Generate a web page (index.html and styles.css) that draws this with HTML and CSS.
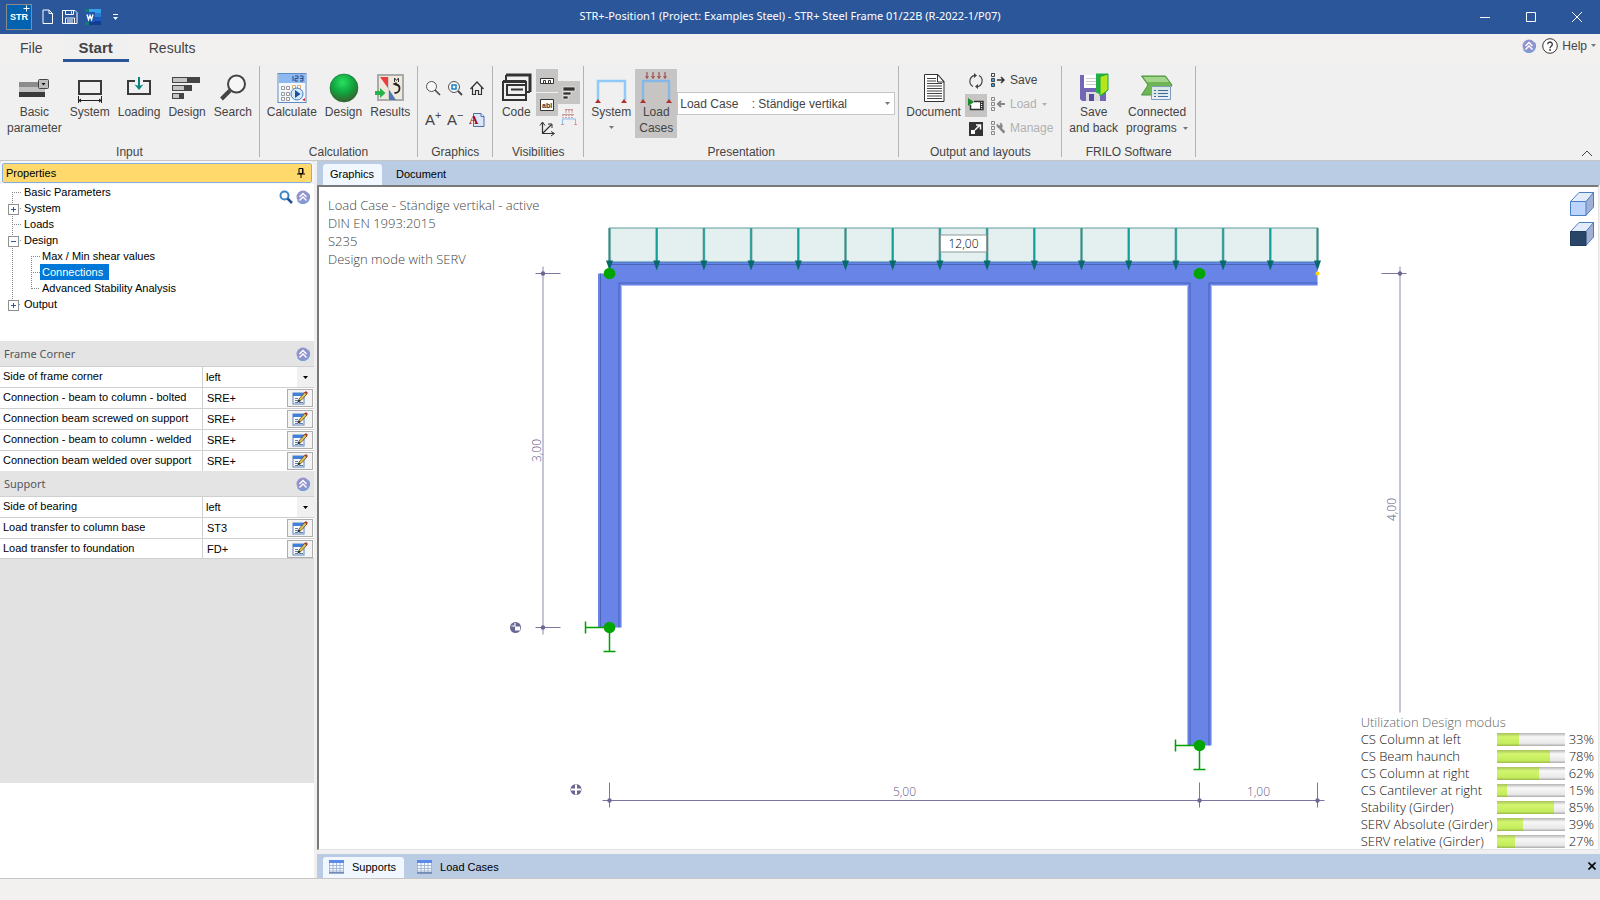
FILE: index.html
```html
<!DOCTYPE html>
<html lang="en">
<head>
  <meta charset="UTF-8" />
  <meta name="viewport" content="width=device-width, initial-scale=1.0"/>
  <title>STR+-Position1 (Project: Examples Steel)</title>
  <link rel="stylesheet" href="styles.css">
</head>
<body>
  <!-- shared icons -->
  <svg class="defs" aria-hidden="true">
    <symbol id="i-collapse" viewBox="0 0 14 14">
      <circle cx="7" cy="7" r="6.5" fill="#9292cf"/>
      <path d="M1.5 10.5a6.500 6.500 0 0 0 11-7" fill="none" stroke="#6fa0d8" stroke-width="1.200"/>
      <path d="M3.500 7 7 3.500 10.500 7M3.500 10.500 7 7l3.500 3.500" fill="none" stroke="#fff" stroke-width="1.400"/>
    </symbol>
    <symbol id="i-edit" viewBox="0 0 16 14">
      <rect x="1" y="2" width="11" height="11" fill="#fff" stroke="#5a82b8"/>
      <path d="M1 2h11v3H1z" fill="#3f7fe0"/>
      <path d="M3 7.500h3M3 9.500h3M3 11.500h3M7 11.500h4" stroke="#5b7fae"/>
      <path d="M6 11 7 8l6-7 2 2-6 6.500z" fill="#e6c04c" stroke="#4a4a40" stroke-width=".8"/>
      <path d="m12.500 1.500 1.500-1.500 2 2-1.500 1.500z" fill="#b8322c"/>
      <path d="M5.500 11.500 7 8.500l1.500 1.500z" fill="#222"/>
    </symbol>
    <symbol id="i-down" viewBox="0 0 5 3">
      <path d="M0 0h5L2.500 3z" fill="currentColor"/>
    </symbol>
    <symbol id="i-grid" viewBox="0 0 15 14">
      <rect x=".5" y=".5" width="14" height="12" fill="#f4f8ff" stroke="#a8b8d8"/>
      <path d="M0 0h15v3H0z" fill="#5b8bea"/>
      <path d="M0 5.500h15M0 8.500h15M0 11h15M4 3v10M7.500 3v10M11 3v10" stroke="#9fb2d2" stroke-width=".9"/>
      <path d="M0 13h15" stroke="#3f5f92"/>
    </symbol>
    <symbol id="i-squares" viewBox="0 0 4 14">
      <path d="M.5.5h3v3h-3zM.5 10.500h3v3h-3zM.5 5.500h3v3h-3z" fill="none" stroke="currentColor"/>
    </symbol>
  </svg>

  <header class="titlebar">
    <div class="quick">
      <svg class="logo" viewBox="0 0 26 26">
        <rect x=".5" y=".5" width="25" height="25" fill="#0463b0" stroke="#8a8a8a"/>
        <text x="4" y="16">STR</text>
        <path d="M20.500 1.500v6M17.500 4.500h6" stroke="#fff"/>
      </svg>
      <button aria-label="New"><svg width="12" height="16" viewBox="0 0 12 16"><path d="M1 1h6l3.500 3.500v10H1zM7 1v3.500h3.500" fill="none" stroke="#fff"/></svg></button>
      <button aria-label="Save"><svg width="16" height="16" viewBox="0 0 16 16"><path d="M.5 1.500h12.500l2 2v11H.5zM3.500 1.500v4h8v-4M9.500 2.500v2M3.500 14.500V9h9v5.500M5 11h6M5 13h6" fill="none" stroke="#fff"/></svg></button>
      <button aria-label="Word">
        <svg width="16" height="16" viewBox="0 0 16 16">
          <path d="M4 0h12v5H4z" fill="#35a0ea"/><path d="M4 4h12v4H4z" fill="#2b7cd3"/><path d="M4 8h12v4H4z" fill="#185abd"/><path d="M4 12h12v4H4z" fill="#103f91"/>
          <path d="M0 0h4v3H0zM0 13h4v3H0z" fill="#107c6c"/>
          <rect y="3" width="10" height="10" fill="#2056ad"/>
          <path d="m2 5.500 1.500 5L5 6.500l1.500 4 1.500-5" fill="none" stroke="#fff" stroke-width="1.400"/>
        </svg>
      </button>
      <button aria-label="Customize"><svg width="7" height="8" viewBox="0 0 7 8"><path d="M1 1.500h5" stroke="#fff"/><path d="M1 4h5L3.500 7z" fill="#fff"/></svg></button>
    </div>
    <h1>STR+-Position1 (Project: Examples Steel) - STR+ Steel Frame 01/22B (R-2022-1/P07)</h1>
    <div class="window-buttons">
      <button aria-label="Minimize"><svg viewBox="0 0 10 10"><path d="M0 5.500h10"/></svg></button>
      <button aria-label="Maximize"><svg viewBox="0 0 10 10"><path d="M.5.5h9v9h-9z"/></svg></button>
      <button aria-label="Close"><svg viewBox="0 0 10 10"><path d="m0 0 10 10M10 0 0 10"/></svg></button>
    </div>
  </header>

  <nav class="menu">
    <a href="#file">File</a>
    <a href="#start" class="active">Start</a>
    <a href="#results">Results</a>
    <div class="help">
      <button aria-label="Collapse ribbon"><svg width="14" height="14"><use href="#i-collapse"/></svg></button>
      <button>
        <svg width="16" height="16" viewBox="0 0 16 16"><circle cx="8" cy="8" r="7.300" fill="#fff" stroke="#333"/><path d="M5.700 6.300a2.300 2.300 0 1 1 3.500 2C8.300 8.900 8 9.200 8 10.300" fill="none" stroke="#333" stroke-width="1.300"/><circle cx="8" cy="12" r=".9" fill="#333"/></svg>
        Help
        <svg class="caret" width="5" height="3"><use href="#i-down"/></svg>
      </button>
    </div>
  </nav>

  <div class="ribbon">
    <section class="group">
      <div class="tools">
        <button class="tool">
          <svg width="32" height="32" viewBox="0 0 32 32"><path d="M1 10h26v5H1z" fill="#8c8c8c"/><path d="M1 15h26v5H1z" fill="#c2c2c2"/><path d="M1 20h26v5H1z" fill="#3b3b3b"/><rect x="20.500" y="7.500" width="10" height="9" rx="1" fill="#bdbdbd" stroke="#444"/><path d="M23.500 11h4l-2 2.500z" fill="#111"/></svg>
          <span>Basic<br>parameter</span>
        </button>
        <button class="tool">
          <svg width="32" height="32" viewBox="0 0 32 32"><path d="M5 9h22v13H5z" fill="none" stroke="#3b3b3b" stroke-width="2"/><path d="M4 28.500h24M4.500 24v7M27.500 24v7" stroke="#222"/><path d="m4 28.500 3-2v4zM28 28.500l-3-2v4z" fill="#222"/></svg>
          <span>System</span>
        </button>
        <button class="tool">
          <svg width="32" height="32" viewBox="0 0 32 32"><path d="M12 9H5v13h22V9h-7" fill="none" stroke="#3b3b3b" stroke-width="2"/><path d="M16 5v9" stroke="#0a8583" stroke-width="2"/><path d="M11.500 12.500 16 18l4.500-5.500L16 14z" fill="#0a8583"/></svg>
          <span>Loading</span>
        </button>
        <button class="tool">
          <svg width="32" height="32" viewBox="0 0 32 32"><path d="M1 5h28v6H1zM1 13h20v6H1zM1 21h12v6H1z" fill="#444"/><path d="M2 6h14v4H2zM2 14h11v4H2zM2 22h6v4H2z" fill="#c4c4c4"/></svg>
          <span>Design</span>
        </button>
        <button class="tool">
          <svg width="32" height="32" viewBox="0 0 32 32"><circle cx="19.500" cy="12" r="8.500" fill="#f6f6f6" stroke="#444" stroke-width="2"/><path d="m13 18.500-8.500 8.500" stroke="#444" stroke-width="4"/></svg>
          <span>Search</span>
        </button>
      </div>
      <h2>Input</h2>
    </section>

    <section class="group">
      <div class="tools">
        <button class="tool">
          <svg width="32" height="32" viewBox="0 0 32 32"><rect x="2" y="1.500" width="28" height="29" fill="#f4f8fd" stroke="#5c8cc8"/><path d="M3 2h26v9H3z" fill="#8db8f0"/><path d="M17 4v5M19 4h3v2.500h-3V9h3M24 4h3v5h-3M24 6.500h3" fill="none" stroke="#2a4a80"/><path d="M5.500 14.500h3v3h-3zM10.500 14.500h3v3h-3zM5.500 20.500h3v3h-3zM10.500 20.500h3v3h-3zM5.500 25.500h3v3h-3zM10.500 25.500h3v3h-3z" fill="#fff" stroke="#999"/><path d="M16.500 13.500h3v3h-3zM21.500 13.500h3v3h-3z" fill="#fff" stroke="#e0a870"/><circle cx="21" cy="22" r="6" fill="#d5ebf9" stroke="#447fbd"/><path d="M19 18v8l5.500-4z" fill="#1d4f9c"/><path d="m26 28 3-2v3z" fill="#c33"/></svg>
          <span>Calculate</span>
        </button>
        <button class="tool">
          <svg width="32" height="32" viewBox="0 0 32 32">
            <defs><radialGradient id="ball" cx=".45" cy=".3" r=".75"><stop offset="0" stop-color="#2ae060"/><stop offset=".5" stop-color="#0fa63f"/><stop offset="1" stop-color="#40552c"/></radialGradient></defs>
            <circle cx="16" cy="16" r="14" fill="url(#ball)" stroke="#1a6b33" stroke-width=".6"/>
          </svg>
          <span>Design</span>
        </button>
        <button class="tool">
          <svg width="32" height="32" viewBox="0 0 32 32"><rect x="4" y="3" width="25" height="25" fill="#efe9dc" stroke="#aaa" stroke-width="2"/><path d="M6 5h8v11z" fill="#ee3b3b"/><path d="M14 16v12h8z" fill="#4f78b5"/><path d="M14.500 5v23" stroke="#ccc"/><path d="M20.500 10V6l2 2.500 2-2.500v4" fill="none" stroke="#333"/><path d="M21 12q5 1 4.500 5-.5 4-5 4" fill="none" stroke="#222" stroke-width="1.800"/><path d="m18.500 12 4-2v4z" fill="#222"/><path d="M1 19h5v-3l5.500 5L6 26v-3H1z" fill="#27b34b"/></svg>
          <span>Results</span>
        </button>
      </div>
      <h2>Calculation</h2>
    </section>

    <section class="group">
      <div class="small-grid">
        <button aria-label="Zoom"><svg viewBox="0 0 16 16"><circle cx="6.500" cy="6.500" r="5" fill="#f8f8f8" stroke="#555"/><path d="m10 10 5 5" stroke="#444" stroke-width="1.600"/></svg></button>
        <button aria-label="Zoom all"><svg viewBox="0 0 16 16"><circle cx="7" cy="7" r="5.500" fill="#f8f8f8" stroke="#555"/><path d="M5 5h4v4H5z" fill="#fff" stroke="#1583c8" stroke-width="1.500"/><path d="m11 11 4 4" stroke="#444" stroke-width="1.800"/></svg></button>
        <button aria-label="Home"><svg viewBox="0 0 16 16"><path d="M1.500 9 8 2l6.500 7M3.500 7.500v7h3v-4h3v4h3v-7" fill="none" stroke="#333" stroke-width="1.200"/></svg></button>
        <button class="font-size"><span>A<sup>+</sup></span></button>
        <button class="font-size"><span>A<sup>−</sup></span></button>
        <button aria-label="Font"><svg viewBox="0 0 16 16"><path d="M4.500 1.500H12l3 3v10H4.500z" fill="#dce6f6" stroke="#4a6fae"/><path d="M12 1.500v3h3" fill="#fff" stroke="#4a6fae"/><text class="font-a" x="0" y="12">A</text></svg></button>
      </div>
      <h2>Graphics</h2>
    </section>

    <section class="group">
      <div class="tools">
        <button class="tool code">
          <svg width="32" height="32" viewBox="0 0 32 32"><path d="M6 3h24v17" fill="none" stroke="#333" stroke-width="3"/><path d="M6 3v5M3 10h23v18H3z" fill="none" stroke="#333" stroke-width="2"/><path d="M3 9.500h23" stroke="#333" stroke-width="3"/><rect x="7" y="13" width="19" height="10" fill="#f0f0f0" stroke="#333" stroke-width="2"/><path d="M26 20h4M11 17.500h12" stroke="#333" stroke-width="2"/></svg>
          <span>Code</span>
        </button>
        <div class="small-col">
          <button class="on" aria-label="Dimensions"><svg viewBox="0 0 16 16"><path d="M1.500 5.500h13v5h-13z" fill="#fff" stroke="#333"/><path d="M4.500 10V7.500h2V10M9.500 10V7.500h2V10" fill="none" stroke="#333"/></svg></button>
          <button class="on" aria-label="Labels"><svg viewBox="0 0 16 16"><path d="M1.500 2.500h13v11h-13z" fill="#fff" stroke="#333"/><text class="abl" x="3" y="11">abl</text></svg></button>
          <button aria-label="Axes"><svg viewBox="0 0 16 16"><path d="M3.500 2v10.500H15M3.500 12.500l9-9" fill="none" stroke="#333" stroke-width="1.200"/><path d="M1 4.500 3.500 1 6 4.500M12 10.500l3.500 2-3.500 2.500M9 3h4v4" fill="none" stroke="#333"/></svg></button>
        </div>
        <div class="small-col">
          <button class="on" aria-label="Utilization"><svg viewBox="0 0 16 16"><path d="M2 2h12v4H2zM2 7h8v3H2zM2 11h5v3H2z" fill="#333" stroke="#fff" stroke-width=".6"/></svg></button>
          <button aria-label="Loads"><svg viewBox="0 0 16 16"><path d="M1.500 15v-5h13v5" fill="none" stroke="#8bbdea"/><path d="M5 .5V4M8 .5V4M11 .5V4M2 5v4M5 5v4M8 5v4M11 5v4" stroke="#b06060" stroke-dasharray="2 1"/><path d="M4 .5h8M3 5.500h10" stroke="#c99"/><path d="M0 16h3M13 16h3" stroke="#c33"/></svg></button>
        </div>
      </div>
      <h2>Visibilities</h2>
    </section>

    <section class="group">
      <div class="tools">
        <button class="tool">
          <svg width="32" height="32" viewBox="0 0 32 32"><path d="M3 28V9h27v19" fill="none" stroke="#90c8f8" stroke-width="2.500"/><path d="m3 27 3 4H0zM29 27l3 4h-6z" fill="#b03030"/></svg>
          <span>System</span>
          <svg class="caret" width="5" height="3"><use href="#i-down"/></svg>
        </button>
        <button class="tool on">
          <svg width="32" height="32" viewBox="0 0 32 32"><path d="M3 28V9h26v19" fill="none" stroke="#85b8e6" stroke-width="2.500"/><path d="m3 27 3 4H0zM29 27l3 4h-6z" fill="#b03030"/><path d="M7 0v6M13 0v6M19 0v6M25 0v6" stroke="#a05050" stroke-width="1.200"/><path d="M5.500 4 7 6.500 8.500 4M11.500 4 13 6.500 14.500 4M17.500 4 19 6.500 20.500 4M23.500 4 25 6.500 26.500 4" fill="none" stroke="#a04848"/></svg>
          <span>Load<br>Cases</span>
        </button>
        <div class="combo">
          <select aria-label="Load case">
            <option>Load Case&nbsp;&nbsp;&nbsp;&nbsp;: Ständige vertikal</option>
          </select>
          <svg class="caret" width="5" height="3"><use href="#i-down"/></svg>
        </div>
      </div>
      <h2>Presentation</h2>
    </section>

    <section class="group">
      <div class="tools">
        <button class="tool">
          <svg width="32" height="32" viewBox="0 0 32 32"><path d="M6.500 2.500H20l6 7v20H6.500z" fill="#fff" stroke="#333"/><path d="M19.500 2.500v7.500H26z" fill="#fff" stroke="#333"/><path d="M9 6.500h9M9 9h9M9 11.500h15M9 14h15M9 16.500h15M9 19h15M9 21.500h15M9 24h15M9 26.500h15" stroke="#444"/></svg>
          <span>Document</span>
        </button>
        <div class="small-col">
          <button aria-label="Refresh"><svg viewBox="0 0 16 16"><path d="M5 13.500A6 6 0 0 1 7 2.300M11 2.500a6 6 0 0 1-2 11.200" fill="none" stroke="#444" stroke-width="1.200"/><path d="m6 0 3 2.500L6 5zM10 11l-3 2.500L10 16z" fill="#444"/></svg></button>
          <button class="on" aria-label="Preview"><svg viewBox="0 0 16 16"><path d="M6 4.500h9v8H2.500V8" fill="#fff" stroke="#333" stroke-width="1.500"/><path d="M12.500 4v9M13 6.500h2M13 8.500h2M13 10.500h2" stroke="#333"/><path d="M0 1v8l6-4z" fill="#1c8a2c"/></svg></button>
          <button aria-label="Full size"><svg viewBox="0 0 16 16"><path d="M1 1h14v14H1z" fill="#333"/><path d="M3 9h4v4H3z" fill="#fff"/><path d="m7 9 5-5M8 4h4.500v4.500" fill="none" stroke="#fff" stroke-width="1.500"/></svg></button>
        </div>
        <div class="layout-col">
          <button><svg width="14" height="14"><use href="#i-squares" width="4"/><path d="M1 6h2v2H1zM1 11h2v2H1z" fill="#39a9e8"/><path d="M6 7h7M10 4l3 3-3 3" fill="none" stroke="#333" stroke-width="1.500"/></svg> Save</button>
          <button disabled><svg width="14" height="14"><use href="#i-squares" width="4"/><path d="M7 7h7M10 4 7 7l3 3" fill="none" stroke="#888" stroke-width="2"/></svg> Load <svg class="caret" width="5" height="3"><use href="#i-down"/></svg></button>
          <button disabled><svg width="14" height="14"><use href="#i-squares" width="4"/><path d="m9 7 4.500 4.500" stroke="#888" stroke-width="2.500"/><path d="M6 2.500 8 4.500l1.500-1L8.500 1.500A3.500 3.500 0 0 1 11 7 3.500 3.500 0 0 1 6 2.500z" fill="#888"/></svg> Manage</button>
        </div>
      </div>
      <h2>Output and layouts</h2>
    </section>

    <section class="group">
      <div class="tools">
        <button class="tool">
          <svg width="32" height="32" viewBox="0 0 32 32"><path d="M2 3h26v26H4l-2-2z" fill="#7566b5"/><path d="M6 3h16v13H6z" fill="#fff"/><path d="M8 6.500h12M8 9.500h12M8 12.500h12" stroke="#ccc"/><path d="M8 20h14v9H8z" fill="#ddd"/><path d="M11 22h5v7h-5z" fill="#5a4b9c"/><path d="M18 1.500h12v16l-5 6-7-3z" fill="#22b04a"/><path d="M22 4.500 30 2v16l-8 6z" fill="#b5e61d" stroke="#1aa53c"/></svg>
          <span>Save<br>and back</span>
        </button>
        <button class="tool">
          <svg width="32" height="32" viewBox="0 0 32 32"><path d="M.5 4h24l6.500 9-6 10H.5l6.500-10z" fill="#6fb552" stroke="#4b9440"/><path d="M2.500 5H24l4 5H6z" fill="#a3d68a"/><path d="M10.500 14.500h19v13h-19z" fill="#e6eef6" fill-opacity=".9" stroke="#7d9cc0"/><path d="M13 18.500h2M13 21.500h2M13 24.500h2M17 18.500h10M17 21.500h10M17 24.500h10" stroke="#456a9c"/></svg>
          <span>Connected<br>programs <svg class="caret" width="5" height="3"><use href="#i-down"/></svg></span>
        </button>
      </div>
      <h2>FRILO Software</h2>
    </section>

    <button class="ribbon-toggle" aria-label="Hide ribbon"><svg width="12" height="7" viewBox="0 0 12 7"><path d="m1 6 5-5 5 5" fill="none" stroke="#444"/></svg></button>
  </div>

  <main>
    <aside>
      <div class="panel-title">
        <h2>Properties</h2>
        <button aria-label="Pin"><svg width="8" height="10" viewBox="0 0 8 10"><path d="M2 .5h4v5H2zM5.500.5v5M0 6h8M4 6v4" fill="none" stroke="#000"/></svg></button>
      </div>

      <div class="tree-panel">
        <ul class="tree">
          <li><a href="#basic">Basic Parameters</a></li>
          <li class="node"><a href="#system">System</a></li>
          <li><a href="#loads">Loads</a></li>
          <li class="node open"><a href="#design">Design</a>
            <ul>
              <li><a href="#shear">Max / Min shear values</a></li>
              <li><a href="#connections" class="selected">Connections</a></li>
              <li><a href="#stability">Advanced Stability Analysis</a></li>
            </ul>
          </li>
          <li class="node"><a href="#output">Output</a></li>
        </ul>
        <div class="tree-tools">
          <button aria-label="Find"><svg width="14" height="14" viewBox="0 0 14 14"><circle cx="5.500" cy="5.500" r="4" fill="#fff" stroke="#3c86c8" stroke-width="2"/><path d="m8.500 8.500 4.500 4.500" stroke="#24509c" stroke-width="2.500"/></svg></button>
          <button aria-label="Collapse"><svg width="14" height="14"><use href="#i-collapse"/></svg></button>
        </div>
      </div>

      <div class="properties">
        <div class="prop-head"><h3>Frame Corner</h3><button aria-label="Collapse Frame Corner"><svg width="14" height="14"><use href="#i-collapse"/></svg></button></div>
        <div class="prop choice"><label for="corner">Side of frame corner</label><div class="combo"><select id="corner"><option>left</option><option>right</option></select><svg class="caret" width="5" height="3"><use href="#i-down"/></svg></div></div>
        <div class="prop"><label for="bolted">Connection - beam to column - bolted</label><input id="bolted" value="SRE+"><button aria-label="Edit"><svg width="16" height="14"><use href="#i-edit"/></svg></button></div>
        <div class="prop"><label for="screwed">Connection beam screwed on support</label><input id="screwed" value="SRE+"><button aria-label="Edit"><svg width="16" height="14"><use href="#i-edit"/></svg></button></div>
        <div class="prop"><label for="welded">Connection - beam to column - welded</label><input id="welded" value="SRE+"><button aria-label="Edit"><svg width="16" height="14"><use href="#i-edit"/></svg></button></div>
        <div class="prop"><label for="over">Connection beam welded over support</label><input id="over" value="SRE+"><button aria-label="Edit"><svg width="16" height="14"><use href="#i-edit"/></svg></button></div>
        <div class="prop-head"><h3>Support</h3><button aria-label="Collapse Support"><svg width="14" height="14"><use href="#i-collapse"/></svg></button></div>
        <div class="prop choice"><label for="bearing">Side of bearing</label><div class="combo"><select id="bearing"><option>left</option><option>right</option></select><svg class="caret" width="5" height="3"><use href="#i-down"/></svg></div></div>
        <div class="prop"><label for="base">Load transfer to column base</label><input id="base" value="ST3"><button aria-label="Edit"><svg width="16" height="14"><use href="#i-edit"/></svg></button></div>
        <div class="prop"><label for="foundation">Load transfer to foundation</label><input id="foundation" value="FD+"><button aria-label="Edit"><svg width="16" height="14"><use href="#i-edit"/></svg></button></div>
      </div>
      <div class="hint"></div>
    </aside>

    <div class="work">
      <nav class="tabs">
        <a href="#graphics" class="active">Graphics</a>
        <a href="#document">Document</a>
      </nav>

      <div class="canvas">
        <!-- frame model, 118 units = 1 m, origin at the left beam node -->
        <svg class="model" viewBox="-290.5 -86.5 1279 662">
          <rect x="0" y="-45.500" width="708" height="35" fill="#e4f0f0" stroke="#5f9c97"/>
          <g fill="#6784e6">
            <path d="M-11.500 0h23v354h-23zM578.500 0h23v472h-23z"/>
            <path d="M0-11.500h708v23H0z"/>
          </g>
          <g fill="none" stroke="#a9baf5">
            <path d="M12 354V12h566v460M602 472V12h106"/>
          </g>
          <g fill="none" stroke="#4a62b8">
            <path d="M0-9h708M-9 0v354M9.500 354V9.500h571V472M599.500 472V9.500H708"/>
          </g>
          <path d="M0-11.500h708" stroke="#3f7fae"/>
          <g id="arrows" fill="#08696a"></g>
          <circle cx="708" cy="0" r="2" fill="#ffd500"/>

          <g stroke="#00a000" stroke-width="1.500">
            <path d="M-24 354H0v24M-24 348v12M-6 378H6M566 472h24v24M566 466v12M584 496h12" fill="none"/>
          </g>
          <g fill="#00a500">
            <circle cx="0" cy="0" r="5.800"/><circle cx="590" cy="0" r="5.800"/>
            <circle cx="0" cy="354" r="5.800"/><circle cx="590" cy="472" r="5.800"/>
          </g>

          <g fill="none" stroke="#c5c3d6" stroke-width="2">
            <path d="M-66.500-7v368M790.500-7v446"/>
          </g>
          <g fill="none" stroke="#7b769f">
            <path d="M-74 0h25M-74 354h25M772 0h25"/>
            <path d="M-7 527h722M0 509v25M590 509v25M708 509v25"/>
          </g>
          <g fill="#6b6795">
            <circle cx="-66.500" cy="0" r="2.200"/><circle cx="-66.500" cy="354" r="2.200"/><circle cx="790.500" cy="0" r="2.200"/>
            <circle cx="0" cy="527" r="2.200"/><circle cx="590" cy="527" r="2.200"/><circle cx="708" cy="527" r="2.200"/>
            <circle cx="-94" cy="354" r="5.500"/><circle cx="-33.500" cy="516" r="5.500"/>
          </g>
          <path d="M-33.500 511v10M-38.500 516h10" stroke="#fff" stroke-width="2"/>
          <path d="M-94.500 353h5v4h-5z" fill="#fff"/>
          <path d="M-98 352.500h3.500v-3" fill="none" stroke="#fff" stroke-width="1.200"/>

          <rect x="331" y="-38.500" width="46" height="17" fill="#fff" stroke="#8a9a9a"/>
          <text class="load" x="354" y="-26">12,00</text>
          <g class="dims">
            <text x="295" y="522">5,00</text>
            <text x="649" y="522">1,00</text>
            <text transform="translate(-69 177) rotate(-90)">3,00</text>
            <text transform="translate(786 236) rotate(-90)">4,00</text>
          </g>
        </svg>

        <div class="caption">
          <p>Load Case - Ständige vertikal - active</p>
          <p>DIN EN 1993:2015</p>
          <p>S235</p>
          <p>Design mode with SERV</p>
        </div>

        <div class="views">
          <button aria-label="Wire view"><svg width="24" height="24" viewBox="0 0 24 24"><path d="M.5 9.500 9 .5h14.500L16 9.500z" fill="#e4ecfb"/><path d="M16 9.500 23.500.5V15L16 23.500z" fill="#a3b0d6"/><path d="M.5 9.500H16v14H.5z" fill="#bcd3fc"/><path d="M.5 9.500 9 .5h14.500V15L16 23.500H.5zM.5 9.500H16v14M16 9.500 23.500.5" fill="none" stroke="#4a7fc0"/></svg></button>
          <button aria-label="Solid view"><svg width="24" height="24" viewBox="0 0 24 24"><path d="M.5 9.500 9 .5h14.500L16 9.500z" fill="#e4ecfb"/><path d="M16 9.500 23.500.5V15L16 23.500z" fill="#a3b0d6"/><path d="M.5 9.500 9 .5h14.500V15L16 23.500M16 9.500 23.500.5" fill="none" stroke="#4a7fc0"/><path d="M.5 9.500H16v14H.5z" fill="#294669" stroke="#1f3a5c"/></svg></button>
        </div>

        <table class="utilization">
          <caption>Utilization Design modus</caption>
          <tr><th>CS Column at left</th><td><div class="bar"><i style="width: 33%"></i></div></td><td>33%</td></tr>
          <tr><th>CS Beam haunch</th><td><div class="bar"><i style="width: 78%"></i></div></td><td>78%</td></tr>
          <tr><th>CS Column at right</th><td><div class="bar"><i style="width: 62%"></i></div></td><td>62%</td></tr>
          <tr><th>CS Cantilever at right</th><td><div class="bar"><i style="width: 15%"></i></div></td><td>15%</td></tr>
          <tr><th>Stability (Girder)</th><td><div class="bar"><i style="width: 85%"></i></div></td><td>85%</td></tr>
          <tr><th>SERV Absolute (Girder)</th><td><div class="bar"><i style="width: 39%"></i></div></td><td>39%</td></tr>
          <tr><th>SERV relative (Girder)</th><td><div class="bar"><i style="width: 27%"></i></div></td><td>27%</td></tr>
        </table>
      </div>

      <nav class="tabs bottom">
        <a href="#supports" class="active"><svg width="15" height="14"><use href="#i-grid"/></svg>Supports</a>
        <a href="#loadcases"><svg width="15" height="14"><use href="#i-grid"/></svg>Load Cases</a>
        <button aria-label="Close"><svg width="8" height="8" viewBox="0 0 8 8"><path d="m.5.5 7 7M7.500.5l-7 7" stroke="#000" stroke-width="1.600"/></svg></button>
      </nav>
    </div>
  </main>

  <footer></footer>

  <script>
    // line load arrows, 16 over the 6 m girder
    const arrows = document.getElementById('arrows');
    let shapes = '';
    for (let i = 0; i <= 15; i++) {
      const x = i * 47.2;
      shapes += `<path d="M${x} -45.5V-12" stroke="#6fa5a1" stroke-width="2.6"/>`;
      shapes += `<path d="M${x} -45.5V-12" stroke="#0aa098" stroke-width="1.2"/>`;
      shapes += `<path d="M${x - 3.5} -13h7l-3.500 10z"/>`;
    }
    arrows.innerHTML = shapes;
  </script>
</body>
</html>
```
FILE: styles.css
```css
* {
  margin: 0;
  padding: 0;
  box-sizing: border-box;
}

body {
  height: 100vh;
  display: flex;
  flex-direction: column;
  font-family: "Liberation Sans", Arial, sans-serif;
  font-size: 12px;
  line-height: 16px;
  color: #444;
  background: #f3f1f0;
  overflow: hidden;
}

button, input, select {
  font: inherit;
  color: inherit;
  background: none;
  border: none;
  border-radius: 0;
}

button {
  display: flex;
  align-items: center;
  justify-content: center;
}

a {
  color: inherit;
  text-decoration: none;
}

h1, h2, h3 {
  font-size: inherit;
  font-weight: normal;
}

svg {
  display: block;
  flex: none;
}

.defs {
  position: absolute;
  width: 0;
  height: 0;
}

.caret {
  color: #777;
}

/* title bar */
.titlebar {
  display: grid;
  grid-template-columns: 1fr auto 1fr;
  align-items: center;
  height: 34px;
  background: #2b579a;
  color: #fff;
}

.titlebar h1 {
  padding: 0 20px 2px 0;
  font-family: "Noto Sans", sans-serif;
  font-size: 11px;
}

.quick {
  display: flex;
  align-items: center;
  gap: 7px;
  padding-left: 6px;
}

.logo {
  width: 26px;
  height: 26px;
  margin-right: 2px;
}

.logo text {
  font: bold 9px "Liberation Sans", sans-serif;
  fill: #fff;
}

.quick button {
  min-width: 14px;
}

.window-buttons {
  display: flex;
  justify-content: flex-end;
}

.window-buttons button {
  width: 46px;
  height: 34px;
}

.window-buttons svg {
  width: 10px;
  height: 10px;
  fill: none;
  stroke: #fff;
}

/* menu */
.menu {
  display: flex;
  height: 28px;
  font-size: 14px;
}

.menu a {
  padding: 6px 20px 0;
}

.menu a.active {
  padding: 6px 16px 0;
  font-size: 15px;
  font-weight: bold;
  background: #f0f0f0;
  border-bottom: 3px solid #2b579a;
}

.help {
  display: flex;
  align-items: center;
  gap: 6px;
  margin-left: auto;
  padding: 0 4px 5px 0;
  font-size: 12px;
}

.help button {
  gap: 4px;
}

/* ribbon */
.ribbon {
  display: flex;
  height: 99px;
  padding: 4px 0 3px;
  background: #f0f0f0;
  border-bottom: 1px solid #c8c6c4;
}

.group {
  display: flex;
  flex-direction: column;
  padding: 3px 3px 0;
  border-right: 1px solid #b4b4b4;
}

.group h2 {
  margin: auto 0 -3px;
  text-align: center;
}

.tools {
  display: flex;
}

.tool {
  flex-direction: column;
  justify-content: flex-start;
  height: 69px;
  padding: 3px 4px 0;
  text-align: center;
}

.tool .caret {
  margin-top: 6px;
}

.tool span .caret {
  display: inline-block;
  margin: 0 0 0 3px;
  vertical-align: middle;
}

.tool.code {
  width: 40px;
}

.on {
  background: #c6c5c4;
}

.small-grid {
  display: grid;
  grid-template-columns: repeat(3, 22px);
  grid-auto-rows: 32px;
  padding: 3px 1px 0;
}

.small-grid svg, .small-col svg {
  width: 16px;
  height: 16px;
}

.font-size {
  font-size: 15px;
}

.font-size sup {
  font-size: 11px;
  line-height: 0;
}

.font-a {
  font: bold 13px "Liberation Serif", serif;
  fill: #a00c18;
}

.abl {
  font: bold 7px "Liberation Sans", sans-serif;
  fill: #333;
}

.small-col {
  display: flex;
  flex-direction: column;
  justify-content: center;
  gap: 1px;
}

.small-col button {
  width: 22px;
  height: 23px;
}

.combo {
  display: grid;
  align-items: center;
}

.combo select {
  grid-area: 1 / 1;
  width: 100%;
  appearance: none;
}

.combo .caret {
  grid-area: 1 / 1;
  justify-self: end;
  margin-right: 5px;
  pointer-events: none;
}

.tools .combo select {
  width: 218px;
  height: 23px;
  padding-left: 2px;
  background: #fff;
  border: 1px solid #c6c6c6;
}

.layout-col {
  display: flex;
  flex-direction: column;
  align-items: flex-start;
  padding: 0 5px 0 4px;
}

.layout-col button {
  height: 24px;
  gap: 5px;
  padding-bottom: 2px;
}

.layout-col button:disabled, .layout-col button:disabled .caret {
  color: #b0b0b0;
}

.layout-col button:disabled svg {
  color: #888;
}

.ribbon-toggle {
  align-self: flex-end;
  margin-left: auto;
  padding-right: 7px;
}

/* properties */
main {
  flex: 1;
  display: grid;
  grid-template-columns: 314px 1fr;
  gap: 3px;
  min-height: 0;
  font-size: 11px;
  color: #000;
  background: #f0f0f0;
}

aside {
  display: flex;
  flex-direction: column;
  background: #e2e2e2;
}

.panel-title {
  display: flex;
  align-items: center;
  justify-content: space-between;
  height: 20px;
  margin: 2px 2px 1px;
  padding: 0 6px 0 3px;
  background: #ffd96b;
  border: 1px solid #86aede;
  border-radius: 2px;
  outline: 2px solid #f4f8fc;
}

.tree-panel {
  display: flex;
  justify-content: space-between;
  height: 157px;
  background: #fff;
}

.tree, .tree ul {
  list-style: none;
}

.tree {
  padding-left: 12px;
}

.tree li {
  position: relative;
  padding-left: 10px;
}

.tree li::before {
  content: "";
  position: absolute;
  left: 0;
  top: 8px;
  width: 8px;
  height: 100%;
  border-top: 1px dotted #888;
  border-left: 1px dotted #888;
}

.tree li:last-child::before {
  border-left: none;
}

.tree li.node::after {
  content: "";
  position: absolute;
  left: -4px;
  top: 4px;
  width: 9px;
  height: 9px;
  border: 1px solid #919191;
  background:
    linear-gradient(#3850a0, #3850a0) center / 5px 1px no-repeat,
    linear-gradient(#3850a0, #3850a0) center / 1px 5px no-repeat,
    #fff;
}

.tree li.open::after {
  background: linear-gradient(#3850a0, #3850a0) center / 5px 1px no-repeat, #fff;
}

.tree ul {
  padding-left: 9px;
}

.tree ul li {
  padding-left: 9px;
}

.tree a {
  display: inline-block;
  height: 16px;
  padding: 0 2px;
  vertical-align: top;
}

.tree a.selected {
  padding-right: 6px;
  background: #0078d7;
  color: #fff;
}

.tree-tools {
  display: flex;
  align-items: flex-start;
  gap: 3px;
  padding: 6px 4px 0 0;
}

.prop-head {
  display: flex;
  align-items: center;
  justify-content: space-between;
  height: 25px;
  padding: 0 4px;
  background: #e4e4e4;
  color: #55555f;
  font-family: "Noto Sans", sans-serif;
}

.prop {
  display: grid;
  grid-template-columns: 202px 1fr 27px;
  height: 21px;
  background: #fff;
  border-top: 1px solid #d0d0d0;
}

.prop:last-child {
  border-bottom: 1px solid #d0d0d0;
}

.prop label {
  padding-left: 3px;
  line-height: 18px;
  white-space: nowrap;
}

.prop input {
  min-width: 0;
  padding-left: 4px;
  border-left: 1px solid #d0d0d0;
}

.prop > button {
  width: 26px;
  height: 18px;
  margin-top: 1px;
  background: #f4f4f4;
  border: 1px solid #adadad;
}

.prop .combo {
  grid-column: 2 / -1;
  border-left: 1px solid #d0d0d0;
}

.prop .combo select {
  height: 20px;
  padding-left: 3px;
  background: linear-gradient(#f0f0f0, #f0f0f0) right / 17px 100% no-repeat;
}

.prop .combo .caret {
  margin-right: 6px;
  color: #000;
}

.hint {
  height: 95px;
  margin-top: auto;
  background: #fff;
}

/* work area */
.work {
  display: flex;
  flex-direction: column;
  min-width: 0;
}

.tabs {
  display: flex;
  height: 24px;
  padding: 3px 0 0 6px;
  background: #b9cce4;
}

.tabs a {
  display: flex;
  align-items: center;
  gap: 8px;
  height: 21px;
  padding: 0 8px 2px 7px;
}

.tabs a + a {
  margin-left: 7px;
}

.tabs a.active {
  background: #f1f7fe;
  border-radius: 3px 3px 0 0;
}

.tabs.bottom {
  margin-top: 4px;
}

.tabs.bottom a {
  padding-left: 6px;
}

.tabs button {
  margin-left: auto;
  padding: 0 4px 4px 0;
}

.canvas {
  flex: 1;
  position: relative;
  min-height: 0;
  margin-right: 1px;
  background: #fff;
  border: 1px solid #e3e3e3;
  border-top: 2px solid #7a7a7a;
  border-left: 2px solid #7a7a7a;
}

.model {
  width: 100%;
  height: 100%;
}

.canvas text, .caption, .utilization {
  font-family: "Open Sans", "Noto Sans", sans-serif;
  font-size: 13px;
  font-weight: 300;
}

.canvas text {
  font-size: 12px;
}

.load, .dims text {
  text-anchor: middle;
}

.dims {
  fill: #5f5b88;
}

.caption {
  position: absolute;
  left: 9px;
  top: 9px;
  line-height: 18px;
  color: #444;
}

.views {
  position: absolute;
  top: 5px;
  right: 4px;
  display: grid;
  gap: 6px;
}

.utilization {
  position: absolute;
  right: 4px;
  bottom: -1px;
  border-collapse: collapse;
  line-height: 17px;
  color: #111;
}

.utilization caption {
  text-align: left;
  color: #666;
}

.utilization th {
  font-weight: inherit;
  text-align: left;
  padding-right: 4px;
}

.utilization td:last-child {
  padding-left: 4px;
}

.bar {
  width: 68px;
  height: 13px;
  background: linear-gradient(#b4b4b4, #f8f8f8 30%, #e8e8e8 80%, #aaa);
}

.bar i {
  display: block;
  height: 13px;
  background: linear-gradient(#a8c25c, #d2f56e 30%, #c4ec5c 80%, #9cb84c);
}

footer {
  height: 22px;
  border-top: 1px solid #c6c6c6;
}
```
